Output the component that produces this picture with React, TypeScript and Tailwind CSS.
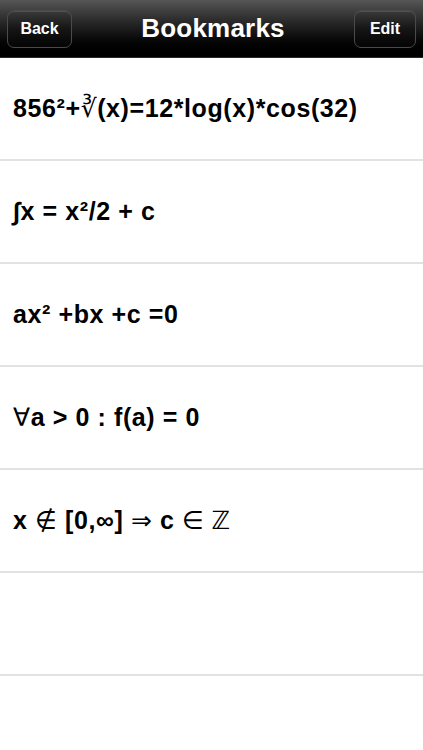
import React from "react";

const font = { fontFamily: '"Liberation Sans", Arial, "DejaVu Sans", sans-serif' };

function NavButton({ label }: { label: string }) {
  return (
    <div className="h-[38px] px-[12px] flex items-center justify-center rounded-[7px] border border-[#4a4a4a] bg-gradient-to-b from-[#3a3a3a] via-[#151515] to-[#050505] shadow-[inset_0_1px_0_rgba(255,255,255,0.12)] text-white font-bold text-[16px]">
      {label}
    </div>
  );
}

const Sym = ({ children, className = "" }: { children: React.ReactNode; className?: string }) => (
  <span className={`font-normal ${className}`} style={{ fontFamily: '"DejaVu Sans", sans-serif' }}>{children}</span>
);

export default function App() {
  const rows: React.ReactNode[] = [
    <>
      {"856²+"}
      <Sym>∛</Sym>
      {"(x)=12*log(x)*cos(32)"}
    </>,
    <>{"∫x = x²/2 + c"}</>,
    <>{"ax² +bx +c =0"}</>,
    <>
      <Sym>∀</Sym>
      {"a > 0 : f(a) = 0"}
    </>,
    <>
      {"x "}
      <Sym>∉</Sym>
      {" [0,∞] "}
      <Sym>⇒</Sym>
      {" c "}
      <Sym>∈</Sym>
      <Sym className="ml-[7px]">ℤ</Sym>
    </>,
    null,
  ];
  return (
    <div className="w-[423px] h-[750px] bg-white overflow-hidden" style={font}>
      <div className="h-[58px] flex items-center justify-between px-[7px] bg-gradient-to-b from-[#565656] via-[#1c1c1c] to-[#000000] border-b border-[#2a2a2a]">
        <div className="w-[65px]"><NavButton label="Back" /></div>
        <div className="text-white font-bold text-[26px] tracking-[0.2px]">Bookmarks</div>
        <div className="w-[62px]"><NavButton label="Edit" /></div>
      </div>
      <div className="flex flex-col">
        {rows.map((r, i) => (
          <div
            key={i}
            className="h-[103px] flex items-center px-[13px] text-[25px] tracking-[0.6px] font-bold text-black border-b-2 border-[#e2e2e2] whitespace-pre"
          >
            {r}
          </div>
        ))}
      </div>
    </div>
  );
}
